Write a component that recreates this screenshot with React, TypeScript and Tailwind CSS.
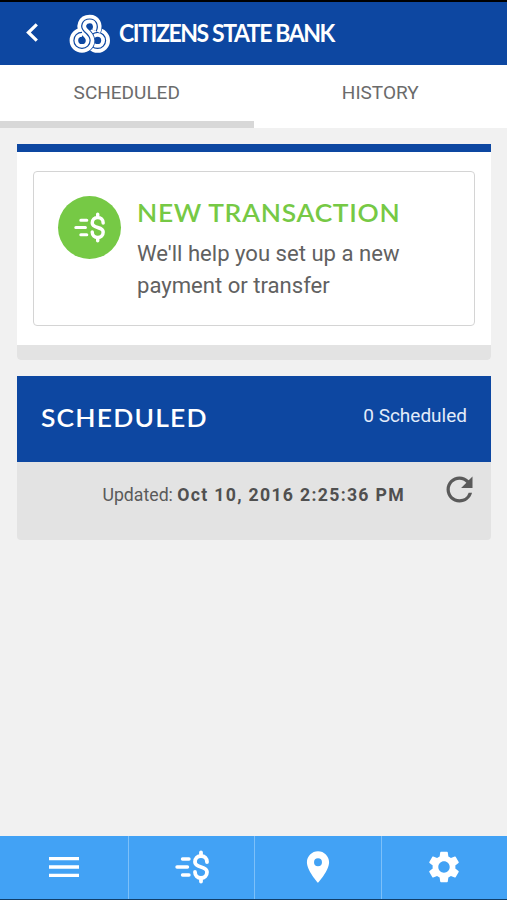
import { MdLocationOn, MdMenu, MdRefresh, MdSettings } from "react-icons/md";

// upper loop running down into the left loop
const S_CURVE =
  "M27.2 17.2C30.2 10.5 26.5 5 20.8 5C13 5 10.3 13 15.5 17.7C19.5 21 21.1 23 21.1 26.4C21.1 31 17.5 34.4 13 34.4C8.5 34.4 4.9 31 4.9 26.4C4.9 21.8 8.5 18.4 13 18.4";

function BankLogo() {
  return (
    <svg className="h-10 w-[42px] shrink-0" viewBox="0 0 42 40" fill="none">
      <circle cx="28.6" cy="26.4" r="8" stroke="#fff" strokeWidth="8.8" />
      <circle cx="28.6" cy="26.4" r="8" stroke="#0d47a1" strokeWidth="1.2" />
      <path d={S_CURVE} stroke="#0d47a1" strokeWidth="10" />
      <path d={S_CURVE} stroke="#fff" strokeWidth="8.6" />
      <path d={S_CURVE} stroke="#0d47a1" strokeWidth="1.2" />
    </svg>
  );
}

function TransferIcon({ className }: { className?: string }) {
  return (
    <svg
      className={className}
      viewBox="0 0 34 34"
      fill="none"
      stroke="currentColor"
      strokeWidth="3.8"
      strokeLinecap="round"
    >
      <path d="M7.5 9h6.5M2 17h10.5M7.5 25h6.5" strokeWidth="3.4" />
      <path d="M32 12C32 8.5 29.5 6 26 6S20 8.5 20 12C20 18.5 32 15.5 32 22C32 25.5 29.5 28 26 28S20 25.5 20 22M26 2.5V6M26 28v3.5" />
    </svg>
  );
}

function Header() {
  return (
    <header className="flex h-[65px] items-center border-t-2 border-black bg-[#0d47a1] text-white">
      <svg
        className="mb-0.5 ml-[26px] h-[19px] w-3 shrink-0"
        viewBox="0 0 12 19"
        fill="none"
        stroke="currentColor"
        strokeWidth="3.2"
      >
        <path d="M10.8 1.3L2.4 9.5l8.4 8.2" />
      </svg>
      <div className="ml-[31px] flex items-center">
        <BankLogo />
        <h1 className="mb-px ml-2 origin-left scale-x-[0.96] whitespace-nowrap font-['Lato'] text-2xl font-bold leading-none tracking-[-1.5px]">
          CITIZENS STATE BANK
        </h1>
      </div>
    </header>
  );
}

function Tabs() {
  return (
    <nav className="grid h-[63px] grid-cols-2 bg-white text-[19px] leading-[56px] text-[#6b6b6b]">
      <button className="border-b-[7px] border-[#d8d8d8]">SCHEDULED</button>
      <button className="border-b-[7px] border-white">HISTORY</button>
    </nav>
  );
}

function NewTransaction() {
  return (
    <section className="overflow-hidden rounded-b border-t-8 border-[#0d47a1] bg-white">
      <div className="px-4 py-[19px]">
        <div className="flex h-[155px] rounded border border-[#d4d4d4] pt-6 pl-6">
          <div className="flex size-[63px] shrink-0 items-center justify-center rounded-full bg-[#76c945] text-white">
            <TransferIcon className="size-[31px]" />
          </div>
          <div className="ml-4">
            <h2 className="origin-left scale-x-[1.1] whitespace-nowrap pt-1 font-['Lato'] text-2xl font-semibold leading-[26px] tracking-[0.6px] text-[#76c945]">
              NEW TRANSACTION
            </h2>
            <p className="mt-3 whitespace-nowrap text-[22.1px] leading-[31.5px] text-[#616161]">
              We'll help you set up a new
              <br />
              payment or transfer
            </p>
          </div>
        </div>
      </div>
      <div className="h-[15px] bg-[#e3e3e3]" />
    </section>
  );
}

function Scheduled() {
  return (
    <section className="mt-4 overflow-hidden rounded-b bg-[#e3e3e3]">
      <div className="flex h-[86px] items-center justify-between bg-[#0d47a1] px-6 text-white">
        <h2 className="origin-left scale-x-[1.1] pb-0.5 font-['Lato'] text-2xl font-semibold tracking-[1.1px]">
          SCHEDULED
        </h2>
        <span className="pb-1.5 text-[19px] text-[#e3ecfa]">0 Scheduled</span>
      </div>
      <div className="flex h-[78px] justify-end pt-2 pr-3 text-[#5a5a5a]">
        <p className="mr-[35px] whitespace-nowrap pt-[13px] text-[17.7px] leading-6">
          Updated:{" "}
          <b className="tracking-[1.3px] text-[#505050]">
            Oct 10, 2016 2:25:36 PM
          </b>
        </p>
        <MdRefresh className="size-[39px]" />
      </div>
    </section>
  );
}

function BottomNav() {
  const items = [
    <MdMenu className="size-10" />,
    <TransferIcon className="size-[34px]" />,
    <MdLocationOn className="size-[38px]" />,
    <MdSettings className="mr-px size-[38px]" />,
  ];
  return (
    <nav className="grid h-16 grid-cols-[129px_126px_127px_1fr] border-b border-[#103e69] bg-[#42a2f5] text-white">
      {items.map((icon, i) => (
        <button
          key={i}
          className="flex items-center justify-center border-r border-[#7cc0f9] pb-0.5 last:border-r-0"
        >
          {icon}
        </button>
      ))}
    </nav>
  );
}

export default function App() {
  return (
    <div className="flex h-[900px] w-[507px] flex-col bg-[#f1f1f1] font-['Roboto',sans-serif]">
      <Header />
      <Tabs />
      <main className="flex-1 px-4 pt-4 pl-[17px]">
        <NewTransaction />
        <Scheduled />
      </main>
      <BottomNav />
    </div>
  );
}
